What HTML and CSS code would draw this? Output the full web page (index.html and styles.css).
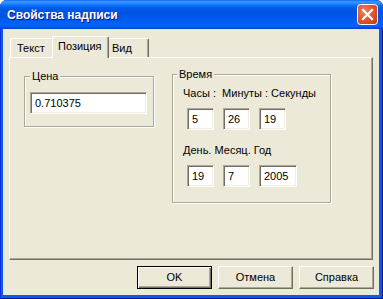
FILE: index.html
```html
<!DOCTYPE html>
<html lang="ru">
<head>
<meta charset="utf-8">
<title>Свойства надписи</title>
<link rel="stylesheet" href="styles.css">
</head>
<body>
<div class="window">
  <div class="titlebar">
    <span class="title">Свойства надписи</span>
    <span class="close">
      <svg width="21" height="21" viewBox="0 0 21 21">
        <defs>
          <radialGradient id="cg" cx="0.35" cy="0.35" r="0.8">
            <stop offset="0" stop-color="#E9825F"/>
            <stop offset="0.6" stop-color="#DB532C"/>
            <stop offset="1" stop-color="#C7401A"/>
          </radialGradient>
        </defs>
        <rect x="0.5" y="0.5" width="20" height="20" rx="3" ry="3" fill="url(#cg)" stroke="#fff" stroke-width="1"/>
        <path d="M6 6 L15 15 M15 6 L6 15" stroke="#fff" stroke-width="2.2" stroke-linecap="square"/>
      </svg>
    </span>
  </div>
  <div class="client">
    <div class="tabs">
      <div class="tab tab-text">Текст</div>
      <div class="tab tab-pos active">Позиция</div>
      <div class="tab tab-view">Вид</div>
    </div>
    <div class="panel">
      <fieldset class="group price">
        <legend>Цена</legend>
        <div class="edit edit-price">0.710375</div>
      </fieldset>
      <fieldset class="group time">
        <legend>Время</legend>
        <div class="label label-time">Часы :  Минуты : Секунды</div>
        <div class="row row-time">
          <div class="edit edit-small">5</div>
          <div class="edit edit-small">26</div>
          <div class="edit edit-small">19</div>
        </div>
        <div class="label label-date">День. Месяц. Год</div>
        <div class="row row-date">
          <div class="edit edit-small">19</div>
          <div class="edit edit-small">7</div>
          <div class="edit edit-year">2005</div>
        </div>
      </fieldset>
    </div>
    <div class="buttons">
      <div class="btn default">OK</div>
      <div class="btn">Отмена</div>
      <div class="btn">Справка</div>
    </div>
  </div>
</div>
</body>
</html>
```
FILE: styles.css
```css
html, body {
  margin: 0;
  padding: 0;
}
body {
  width: 383px;
  height: 299px;
  overflow: hidden;
  background: #ffffff;
  font-family: "Liberation Sans", Arial, sans-serif;
  font-size: 11px;
  color: #000;
}
.window {
  width: 383px;
  height: 299px;
  box-sizing: border-box;
  display: flex;
  flex-direction: column;
  background: #0A5AEB;
  border-radius: 7px 7px 0 0;
  overflow: hidden;
  box-shadow: inset 1px 0 #0831D9, inset -1px 0 #00138C, inset 0 -1px #00138C;
}
.titlebar {
  height: 29px;
  flex: none;
  display: flex;
  align-items: center;
  padding: 0 5px 0 7px;
  background: linear-gradient(180deg,
    #0058EE 0px, #3A93FF 1px, #2E8EFF 3px, #1077FD 5px, #0264F2 7px,
    #0057E5 9px, #0054E3 12px, #0057EA 17px, #005EF5 22px,
    #0062FA 25px, #005AF0 27px, #0049D8 28px, #0040C8 29px);
}
.title {
  color: #fff;
  font-weight: bold;
  font-size: 12px;
  text-shadow: 1px 1px 0 #0A1883;
  margin-top: 1px;
}
.close {
  margin-left: auto;
  width: 21px;
  height: 21px;
  display: flex;
}
.client {
  flex: 1;
  margin: 0 4px 4px 3px;
  background: #ECE9D8;
  padding: 7px 6px 6px 6px;
  display: flex;
  flex-direction: column;
}
.tabs {
  display: flex;
  align-items: flex-end;
  height: 21px;
  padding-left: 1px;
  flex: none;
}
.tab {
  box-sizing: border-box;
  height: 19px;
  border-top: 1px solid #fff;
  border-left: 1px solid #fff;
  border-right: 1px solid #716F64;
  box-shadow: inset -1px 0 #ACA899;
  border-radius: 2px 2px 0 0;
  background: #ECE9D8;
  line-height: 18px;
  white-space: nowrap;
}
.tab-text {
  width: 44px;
  padding-left: 6px;
}
.tab-pos {
  width: 57px;
  padding-left: 5px;
}
.tab-view {
  width: 42px;
  padding-left: 4px;
}
.tab.active {
  height: 22px;
  margin: 0 -2px -1px -2px;
  position: relative;
  z-index: 1;
  line-height: 19px;
  padding-bottom: 2px;
}
.panel {
  box-sizing: border-box;
  height: 203px;
  flex: none;
  border-top: 1px solid #fff;
  border-left: 1px solid #fff;
  border-right: 1px solid #716F64;
  border-bottom: 1px solid #716F64;
  box-shadow: inset -1px -1px #ACA899;
  display: flex;
  align-items: flex-start;
}
.group {
  box-sizing: border-box;
  margin: 0;
  min-inline-size: 0;
  border: 1px solid #ACA899;
  box-shadow: inset 1px 1px #fff, 1px 1px #fff;
}
.group legend {
  padding: 0 2px;
  line-height: 13px;
  background: #ECE9D8;
}
.price {
  width: 130px;
  margin: 12px 0 0 14px;
  padding: 0 0 12px 5px;
}
.time {
  width: 159px;
  margin: 10px 0 0 18px;
  padding: 0 0 15px 4px;
}
.edit {
  box-sizing: border-box;
  height: 22px;
  background: #fff;
  border: 1px solid;
  border-color: #ACA899 #fff #fff #ACA899;
  box-shadow: inset 1px 1px #716F64, inset -1px -1px #F1EFE2;
  padding-left: 4px;
  line-height: 20px;
  white-space: nowrap;
}
.edit-price {
  width: 117px;
  margin-top: 9px;
}
.edit-small {
  width: 27px;
}
.edit-year {
  width: 38px;
}
.label {
  line-height: 13px;
  margin-left: 6px;
  white-space: pre;
}
.label-time {
  margin-top: 6px;
}
.label-date {
  margin-top: 14px;
}
.row {
  display: flex;
  gap: 9px;
  margin-left: 10px;
}
.row-time {
  margin-top: 8px;
}
.row-date {
  margin-top: 8px;
}
.buttons {
  display: flex;
  justify-content: flex-end;
  gap: 6px;
  margin-top: 6px;
  margin-right: -1px;
  flex: none;
}
.btn {
  box-sizing: border-box;
  width: 75px;
  height: 23px;
  border: 1px solid;
  border-color: #fff #716F64 #716F64 #fff;
  box-shadow: inset -1px -1px #ACA899;
  background: #ECE9D8;
  text-align: center;
  line-height: 21px;
}
.btn.default {
  border-color: #000;
  box-shadow: inset 1px 1px #fff, inset -1px -1px #716F64, inset -2px -2px #ACA899;
}
```
